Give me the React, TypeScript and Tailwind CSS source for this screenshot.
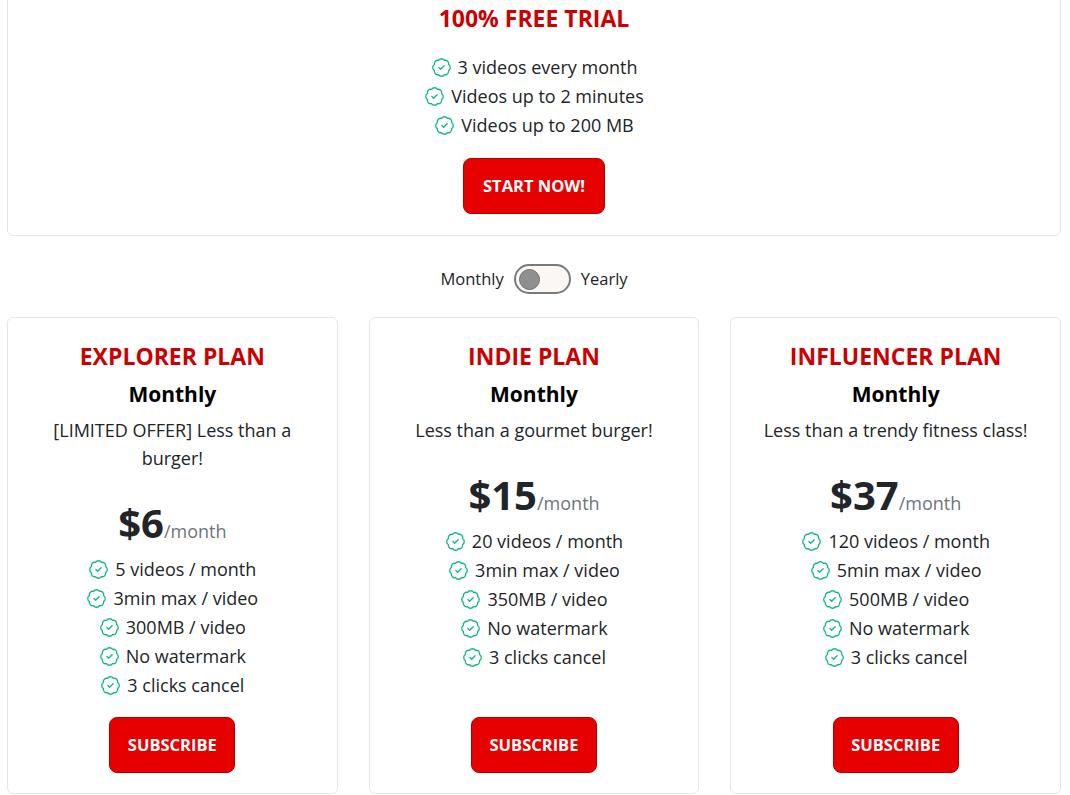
import { useState } from "react";

type Plan = {
  name: string;
  tagline: string;
  price: number;
  features: string[];
};

const plans: Plan[] = [
  {
    name: "EXPLORER PLAN",
    tagline: "[LIMITED OFFER] Less than a burger!",
    price: 6,
    features: ["5 videos / month", "3min max / video", "300MB / video", "No watermark", "3 clicks cancel"],
  },
  {
    name: "INDIE PLAN",
    tagline: "Less than a gourmet burger!",
    price: 15,
    features: ["20 videos / month", "3min max / video", "350MB / video", "No watermark", "3 clicks cancel"],
  },
  {
    name: "INFLUENCER PLAN",
    tagline: "Less than a trendy fitness class!",
    price: 37,
    features: ["120 videos / month", "5min max / video", "500MB / video", "No watermark", "3 clicks cancel"],
  },
];

const CheckBadge = () => (
  <svg
    width="21"
    height="21"
    viewBox="0 0 24 24"
    fill="none"
    stroke="#10b981"
    strokeWidth="1.5"
    strokeLinecap="round"
    strokeLinejoin="round"
    className="shrink-0"
  >
    <path d="M3.85 8.62a4 4 0 0 1 4.78-4.77 4 4 0 0 1 6.74 0 4 4 0 0 1 4.78 4.78 4 4 0 0 1 0 6.74 4 4 0 0 1-4.77 4.78 4 4 0 0 1-6.75 0 4 4 0 0 1-4.78-4.77 4 4 0 0 1 0-6.76Z" />
    <path d="m9 12 2 2 4-4" />
  </svg>
);

const Feature = ({ text }: { text: string }) => (
  <li className="flex items-center justify-center gap-[6px] leading-[29px]">
    <CheckBadge />
    <span>{text}</span>
  </li>
);

const RedButton = ({ label, className = "" }: { label: string; className?: string }) => (
  <button
    className={`bg-[#e60000] border border-[#b30000] rounded-lg text-white font-bold text-[16.5px] h-[56px] ${className}`}
  >
    {label}
  </button>
);

export default function App() {
  const [yearly, setYearly] = useState(false);

  return (
    <div
      className="bg-white min-h-screen pl-[7px] pr-[9px] text-[#212529] text-[18px] overflow-hidden"
      style={{ fontFamily: '"Open Sans", "Noto Sans", sans-serif' }}
    >
      <div className="-mt-[20px] pt-[21px] pb-[21px] border border-[#e3e6ea] rounded-md flex flex-col items-center">
        <h1 className="text-[#cc0000] font-bold text-[23px] leading-[32px]">100% FREE TRIAL</h1>
        <ul className="mt-[19px]">
          <Feature text="3 videos every month" />
          <Feature text="Videos up to 2 minutes" />
          <Feature text="Videos up to 200 MB" />
        </ul>
        <RedButton label="START NOW!" className="mt-[18px] w-[142px]" />
      </div>

      <div className="flex items-center justify-center gap-[10px] mt-[28px] mb-[23px] text-[16.5px]">
        <span>Monthly</span>
        <button
          onClick={() => setYearly(!yearly)}
          className="w-[57px] h-[30px] rounded-full border-2 border-[#7a7a7a] bg-[#fbf7f5] flex items-center px-[3px]"
        >
          <span
            className={`w-[21px] h-[21px] rounded-full bg-[#8f8f8f] border border-[#6f6f6f] ${yearly ? "ml-auto" : ""}`}
          />
        </button>
        <span>Yearly</span>
      </div>

      <div className="grid grid-cols-3 gap-[31px]">
        {plans.map((p) => (
          <div
            key={p.name}
            className="border border-[#e3e6ea] rounded-md pt-[22px] pb-[20px] px-[20px] flex flex-col items-center text-center"
          >
            <h2 className="text-[#cc0000] font-bold text-[23px] leading-[32px]">{p.name}</h2>
            <h3 className="font-bold text-[21px] leading-[30px] mt-[7px] text-black">Monthly</h3>
            <p className="leading-[28px] mt-[7px]">{p.tagline}</p>
            <div className="mt-[27px] leading-[48px]">
              <span className="font-bold text-[40px]">${p.price}</span>
              <span className="text-[#6c757d] text-[18px]">/month</span>
            </div>
            <ul>
              {p.features.map((f) => (
                <Feature key={f} text={f} />
              ))}
            </ul>
            <div className="flex-1 flex items-end pt-[17px]">
              <RedButton label="SUBSCRIBE" className="w-[126px]" />
            </div>
          </div>
        ))}
      </div>
    </div>
  );
}
